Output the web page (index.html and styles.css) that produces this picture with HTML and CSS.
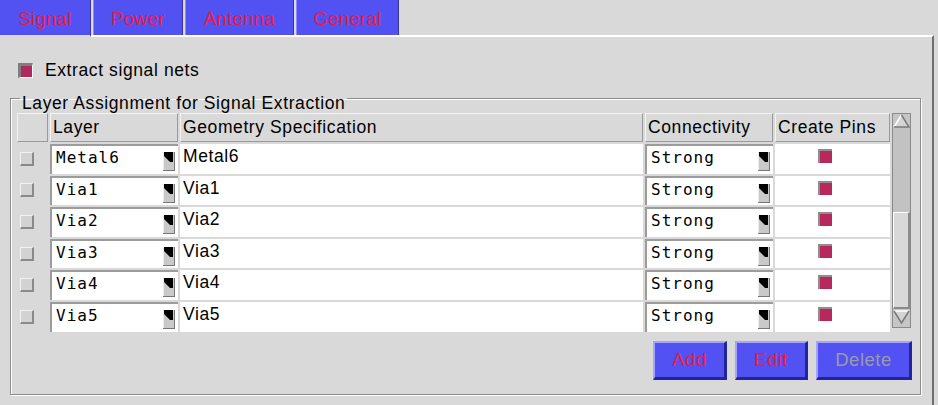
FILE: index.html
```html
<!DOCTYPE html>
<html>
<head>
<meta charset="utf-8">
<link rel="stylesheet" href="styles.css">
</head>
<body>
<div class="tabs">
  <div class="tab sel t1">Signal</div>
  <div class="tab t2">Power</div>
  <div class="tab t3">Antenna</div>
  <div class="tab t4">General</div>
</div>
<div class="panel">
  <div class="check-row"><span class="cb-on"></span><span>Extract signal nets</span></div>
  <fieldset class="group">
    <legend>Layer Assignment for Signal Extraction</legend>
    <div class="table-wrap">
      <div class="grid">
        <div class="hd"></div>
        <div class="hd">Layer</div>
        <div class="hd">Geometry Specification</div>
        <div class="hd">Connectivity</div>
        <div class="hd">Create Pins</div>

        <div class="c0"><span class="rb"></span></div>
        <div class="dd"><span class="val">Metal6</span><svg class="ddb" width="12" height="19" viewBox="0 0 12 19"><rect width="12" height="19" fill="#c9c9c9"/><rect width="1" height="19" fill="#ececec"/><rect x="11" width="1" height="19" fill="#777"/><rect y="18" width="12" height="1" fill="#777"/><polygon points="1,0 10,0 10,10 7,10 1,4" fill="#000"/></svg></div>
        <div class="tx">Metal6</div>
        <div class="dd"><span class="val">Strong</span><svg class="ddb" width="12" height="19" viewBox="0 0 12 19"><rect width="12" height="19" fill="#c9c9c9"/><rect width="1" height="19" fill="#ececec"/><rect x="11" width="1" height="19" fill="#777"/><rect y="18" width="12" height="1" fill="#777"/><polygon points="1,0 10,0 10,10 7,10 1,4" fill="#000"/></svg></div>
        <div class="pc"><span class="pb"></span></div>

        <div class="c0"><span class="rb"></span></div>
        <div class="dd"><span class="val">Via1</span><svg class="ddb" width="12" height="19" viewBox="0 0 12 19"><rect width="12" height="19" fill="#c9c9c9"/><rect width="1" height="19" fill="#ececec"/><rect x="11" width="1" height="19" fill="#777"/><rect y="18" width="12" height="1" fill="#777"/><polygon points="1,0 10,0 10,10 7,10 1,4" fill="#000"/></svg></div>
        <div class="tx">Via1</div>
        <div class="dd"><span class="val">Strong</span><svg class="ddb" width="12" height="19" viewBox="0 0 12 19"><rect width="12" height="19" fill="#c9c9c9"/><rect width="1" height="19" fill="#ececec"/><rect x="11" width="1" height="19" fill="#777"/><rect y="18" width="12" height="1" fill="#777"/><polygon points="1,0 10,0 10,10 7,10 1,4" fill="#000"/></svg></div>
        <div class="pc"><span class="pb"></span></div>

        <div class="c0"><span class="rb"></span></div>
        <div class="dd"><span class="val">Via2</span><svg class="ddb" width="12" height="19" viewBox="0 0 12 19"><rect width="12" height="19" fill="#c9c9c9"/><rect width="1" height="19" fill="#ececec"/><rect x="11" width="1" height="19" fill="#777"/><rect y="18" width="12" height="1" fill="#777"/><polygon points="1,0 10,0 10,10 7,10 1,4" fill="#000"/></svg></div>
        <div class="tx">Via2</div>
        <div class="dd"><span class="val">Strong</span><svg class="ddb" width="12" height="19" viewBox="0 0 12 19"><rect width="12" height="19" fill="#c9c9c9"/><rect width="1" height="19" fill="#ececec"/><rect x="11" width="1" height="19" fill="#777"/><rect y="18" width="12" height="1" fill="#777"/><polygon points="1,0 10,0 10,10 7,10 1,4" fill="#000"/></svg></div>
        <div class="pc"><span class="pb"></span></div>

        <div class="c0"><span class="rb"></span></div>
        <div class="dd"><span class="val">Via3</span><svg class="ddb" width="12" height="19" viewBox="0 0 12 19"><rect width="12" height="19" fill="#c9c9c9"/><rect width="1" height="19" fill="#ececec"/><rect x="11" width="1" height="19" fill="#777"/><rect y="18" width="12" height="1" fill="#777"/><polygon points="1,0 10,0 10,10 7,10 1,4" fill="#000"/></svg></div>
        <div class="tx">Via3</div>
        <div class="dd"><span class="val">Strong</span><svg class="ddb" width="12" height="19" viewBox="0 0 12 19"><rect width="12" height="19" fill="#c9c9c9"/><rect width="1" height="19" fill="#ececec"/><rect x="11" width="1" height="19" fill="#777"/><rect y="18" width="12" height="1" fill="#777"/><polygon points="1,0 10,0 10,10 7,10 1,4" fill="#000"/></svg></div>
        <div class="pc"><span class="pb"></span></div>

        <div class="c0"><span class="rb"></span></div>
        <div class="dd"><span class="val">Via4</span><svg class="ddb" width="12" height="19" viewBox="0 0 12 19"><rect width="12" height="19" fill="#c9c9c9"/><rect width="1" height="19" fill="#ececec"/><rect x="11" width="1" height="19" fill="#777"/><rect y="18" width="12" height="1" fill="#777"/><polygon points="1,0 10,0 10,10 7,10 1,4" fill="#000"/></svg></div>
        <div class="tx">Via4</div>
        <div class="dd"><span class="val">Strong</span><svg class="ddb" width="12" height="19" viewBox="0 0 12 19"><rect width="12" height="19" fill="#c9c9c9"/><rect width="1" height="19" fill="#ececec"/><rect x="11" width="1" height="19" fill="#777"/><rect y="18" width="12" height="1" fill="#777"/><polygon points="1,0 10,0 10,10 7,10 1,4" fill="#000"/></svg></div>
        <div class="pc"><span class="pb"></span></div>

        <div class="c0"><span class="rb"></span></div>
        <div class="dd"><span class="val">Via5</span><svg class="ddb" width="12" height="19" viewBox="0 0 12 19"><rect width="12" height="19" fill="#c9c9c9"/><rect width="1" height="19" fill="#ececec"/><rect x="11" width="1" height="19" fill="#777"/><rect y="18" width="12" height="1" fill="#777"/><polygon points="1,0 10,0 10,10 7,10 1,4" fill="#000"/></svg></div>
        <div class="tx">Via5</div>
        <div class="dd"><span class="val">Strong</span><svg class="ddb" width="12" height="19" viewBox="0 0 12 19"><rect width="12" height="19" fill="#c9c9c9"/><rect width="1" height="19" fill="#ececec"/><rect x="11" width="1" height="19" fill="#777"/><rect y="18" width="12" height="1" fill="#777"/><polygon points="1,0 10,0 10,10 7,10 1,4" fill="#000"/></svg></div>
        <div class="pc"><span class="pb"></span></div>
      </div>
      <div class="sb">
        <svg class="sb-arrow" width="17" height="14" viewBox="0 0 17 14"><polygon points="8.5,1 16,13 1,13" fill="#d4d4d4"/><polyline points="1,13 8.5,1" stroke="#ffffff" stroke-width="1.5" fill="none"/><polyline points="8.5,1 16,13 1,13" stroke="#7a7a7a" stroke-width="1.5" fill="none"/></svg>
        <div class="sb-trough"></div>
        <div class="sb-thumb"></div>
        <svg class="sb-arrow" width="17" height="16" viewBox="0 0 17 16"><polygon points="1,2 16,2 8.5,14" fill="#d4d4d4"/><polyline points="1,2 16,2" stroke="#ffffff" stroke-width="1.5" fill="none"/><polyline points="1,2 8.5,14 16,2" stroke="#7a7a7a" stroke-width="1.5" fill="none"/></svg>
      </div>
    </div>
    <div class="buttons">
      <div class="btn b-add">Add</div>
      <div class="btn b-edit">Edit</div>
      <div class="btn b-del">Delete</div>
    </div>
  </fieldset>
</div>
</body>
</html>
```

FILE: styles.css
```css
html, body {
  margin: 0;
  padding: 0;
}
body {
  width: 938px;
  height: 405px;
  overflow: hidden;
  background: #d9d9d9;
  font-family: "Liberation Sans", Arial, sans-serif;
  color: #000;
}

/* Tabs */
.tabs {
  display: flex;
  align-items: flex-start;
  gap: 2px;
  height: 35px;
}
.tab {
  height: 35px;
  box-sizing: border-box;
  background: #5252f2;
  color: #f01a3c;
  font-size: 18.5px;
  letter-spacing: 0.3px;
  display: flex;
  align-items: center;
  justify-content: center;
  border-left: 1px solid #8a8aff;
  border-right: 1px solid #34349a;
  padding-top: 2px;
}
.tab.sel {
  height: 37px;
  margin-bottom: -2px;
  border-bottom: 2px solid #d9d9d9;
  border-left: none;
  position: relative;
  z-index: 1;
}
.t1 { width: 91px; }
.t2 { width: 90px; }
.t3 { width: 109px; }
.t4 { width: 103px; }

/* Panel */
.panel {
  width: 932px;
  height: 345px;
  border-top: 2px solid #ffffff;
  border-right: 2px solid #6e6e6e;
  padding-top: 23px;
  box-sizing: content-box;
}
.check-row {
  display: flex;
  align-items: center;
  gap: 12px;
  height: 20px;
  margin-left: 18px;
  font-size: 17.5px;
  letter-spacing: 0.6px;
}
.cb-on {
  width: 15px;
  height: 15px;
  box-sizing: border-box;
  background: #b0285c;
  border-top: 3px solid #7e7e7e;
  border-left: 3px solid #7e7e7e;
  border-bottom: 1px solid #ffffff;
  border-right: 1px solid #ffffff;
}

/* Group box */
.group {
  margin: 3px 0 0 10px;
  width: 911px;
  box-sizing: border-box;
  border: 1px solid #8c8c8c;
  box-shadow: inset 1px 1px 0 #ffffff, 1px 1px 0 #ffffff;
  padding: 0 8px 14px 6px;
  min-inline-size: 0;
}
.group legend {
  font-size: 17.5px;
  letter-spacing: 0.6px;
  line-height: 19px;
  padding: 11px 2px 0;
  margin-left: 3px;
}

.table-wrap {
  display: flex;
  align-items: flex-start;
  gap: 2px;
}
.grid {
  display: grid;
  grid-template-columns: 31px 128px 463px 128px 115px;
  grid-template-rows: 29px repeat(6, 29.6px);
  gap: 2px;
}
.hd {
  box-sizing: border-box;
  border-top: 1px solid #f4f4f4;
  border-left: 1px solid #f4f4f4;
  border-right: 1px solid #9a9a9a;
  border-bottom: 1px solid #9a9a9a;
  padding: 0 0 0 2px;
  font-size: 17.5px;
  letter-spacing: 0.6px;
  display: flex;
  align-items: center;
  white-space: nowrap;
  overflow: hidden;
}
.c0 {
  display: flex;
  align-items: center;
  padding-left: 3px;
}
.rb {
  width: 14px;
  height: 14px;
  box-sizing: border-box;
  background: #d2d2d2;
  border-top: 1px solid #f2f2f2;
  border-left: 1px solid #f2f2f2;
  border-bottom: 2px solid #8a8a8a;
  border-right: 2px solid #8a8a8a;
}
.dd {
  background: #ffffff;
  box-sizing: border-box;
  border-top: 2px solid #9c9c9c;
  border-left: 2px solid #9c9c9c;
  display: flex;
  justify-content: space-between;
  align-items: flex-start;
  padding: 2px 3px 0 4px;
}
.val {
  font-family: "DejaVu Sans Mono", monospace;
  font-size: 16px;
  letter-spacing: 1px;
  line-height: 20px;
}
.ddb {
  margin-top: 4px;
  display: block;
}
.tx {
  background: #ffffff;
  padding: 2px 0 0 3px;
  font-size: 17.5px;
  letter-spacing: 0.6px;
  line-height: 20px;
}
.pc {
  background: #ffffff;
  padding: 5px 0 0 43px;
}
.pb {
  display: block;
  width: 14px;
  height: 14px;
  box-sizing: border-box;
  background: #b8285c;
  border-top: 2px solid #8e8e8e;
  border-left: 2px solid #8e8e8e;
}

/* Scrollbar */
.sb {
  width: 19px;
  height: 215px;
  box-sizing: border-box;
  border: 1px solid #8a8a8a;
  display: flex;
  flex-direction: column;
  background: #c6c6c6;
}
.sb-arrow {
  display: block;
  flex: none;
}
.sb-trough {
  height: 84px;
  background: #c2c2c2;
}
.sb-thumb {
  height: 97px;
  box-sizing: border-box;
  background: #d8d8d8;
  border-top: 1px solid #ffffff;
  border-left: 1px solid #ffffff;
  border-bottom: 2px solid #8a8a8a;
  border-right: 2px solid #8a8a8a;
}

/* Buttons */
.buttons {
  display: flex;
  justify-content: flex-end;
  gap: 8px;
  margin-top: 9px;
}
.btn {
  height: 39px;
  box-sizing: border-box;
  background: #5252f2;
  border-top: 2px solid #a4a4ff;
  border-left: 2px solid #a4a4ff;
  border-bottom: 3px solid #24249a;
  border-right: 3px solid #24249a;
  color: #f01a3c;
  font-size: 18.5px;
  letter-spacing: 0.5px;
  display: flex;
  align-items: center;
  justify-content: center;
}
.b-add { width: 74px; }
.b-edit { width: 73px; }
.b-del { width: 96px; color: #9a9aa6; }
```
